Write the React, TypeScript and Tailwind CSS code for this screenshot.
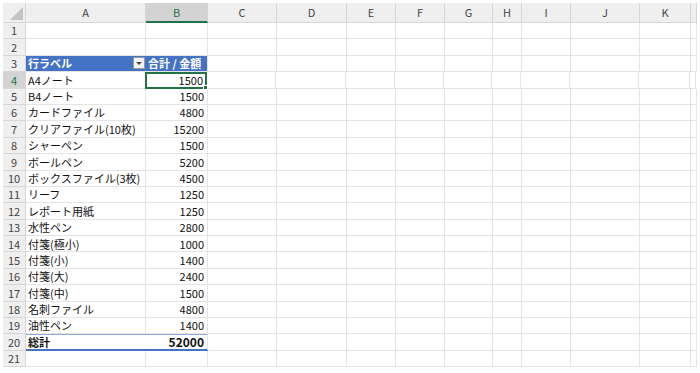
import React from 'react';

const colWidths = [
  'w-[120px]',
  'w-[62px]',
  'w-[69px]',
  'w-[70px]',
  'w-[49px]',
  'w-[49px]',
  'w-[48px]',
  'w-[29px]',
  'w-[49px]',
  'w-[69px]',
  'w-[51px]',
  'w-[6px]',
];
const colNames = ['A', 'B', 'C', 'D', 'E', 'F', 'G', 'H', 'I', 'J', 'K', ''];

const items: [string, number][] = [
  ['A4ノート', 1500],
  ['B4ノート', 1500],
  ['カードファイル', 4800],
  ['クリアファイル(10枚)', 15200],
  ['シャーペン', 1500],
  ['ボールペン', 5200],
  ['ボックスファイル(3枚)', 4500],
  ['リーフ', 1250],
  ['レポート用紙', 1250],
  ['水性ペン', 2800],
  ['付箋(極小)', 1000],
  ['付箋(小)', 1400],
  ['付箋(大)', 2400],
  ['付箋(中)', 1500],
  ['名刺ファイル', 4800],
  ['油性ペン', 1400],
];

const font = { fontFamily: '"Noto Sans CJK JP", "Noto Sans", sans-serif' };

// 空セル（C列以降）
const EmptyCells = () => (
  <>
    {colWidths.slice(2).map((w, i) => (
      <div key={i} className={`${w} shrink-0 border-r border-b border-[#e4e4e4]`} />
    ))}
  </>
);

const RowHead = ({ n, active }: { n: number; active?: boolean }) => (
  <div
    className={`w-[23px] shrink-0 flex items-center justify-center text-[11px] border-r border-b border-[#d6d6d6] ${
      active ? 'bg-[#d3d3d3] text-[#217346]' : 'bg-[#efefef] text-[#444]'
    }`}
  >
    {n}
  </div>
);

const Row = ({ n, children, active }: { n: number; children?: React.ReactNode; active?: boolean }) => (
  <div className="flex h-[16.4px]">
    <RowHead n={n} active={active} />
    {children ?? (
      <>
        <div className={`${colWidths[0]} shrink-0 border-r border-b border-[#e4e4e4]`} />
        <div className={`${colWidths[1]} shrink-0 border-r border-b border-[#e4e4e4]`} />
      </>
    )}
    <EmptyCells />
  </div>
);

export default function App() {
  return (
    <div className="w-[700px] h-[373px] bg-white pl-[3px] pt-[3px] overflow-hidden text-[#111]" style={font}>
      {/* 列見出し */}
      <div className="flex h-[20px]">
        <div className="w-[23px] shrink-0 bg-[#efefef] border-r border-b border-[#d6d6d6] relative">
          <div className="absolute right-[2px] bottom-[2px] w-0 h-0 border-l-[13px] border-l-transparent border-b-[13px] border-b-[#c4c4c4]" />
        </div>
        {colWidths.map((w, i) => (
          <div
            key={i}
            className={`${w} shrink-0 flex items-center justify-center text-[11px] border-r ${
              i === 1
                ? 'bg-[#d3d3d3] text-[#217346] border-b-2 border-b-[#217346] border-r-[#d6d6d6]'
                : 'bg-[#efefef] text-[#444] border-b border-[#d6d6d6]'
            }`}
          >
            {colNames[i]}
          </div>
        ))}
      </div>

      <Row n={1} />
      <Row n={2} />
      <Row n={3}>
        <div className={`${colWidths[0]} shrink-0 bg-[#4472c4] text-white font-bold text-[11px] flex items-center justify-between pl-[2px] pr-[1px] border-b border-[#e4e4e4]`}>
          <span>行ラベル</span>
          <span className="w-[12px] h-[12px] bg-[#f3f3f3] border border-[#9a9a9a] flex items-center justify-center">
            <span className="w-0 h-0 border-l-[3px] border-r-[3px] border-t-[3px] border-l-transparent border-r-transparent border-t-[#444]" />
          </span>
        </div>
        <div className={`${colWidths[1]} shrink-0 bg-[#4472c4] text-white font-bold text-[11px] flex items-center pl-[2px] border-r border-b border-[#e4e4e4] whitespace-nowrap`}>
          合計 / 金額
        </div>
      </Row>
      {items.map(([name, v], i) => (
        <Row key={name} n={i + 4} active={i === 0}>
          <div className={`${colWidths[0]} shrink-0 text-[11px] flex items-center pl-[2px] border-r border-b border-[#e4e4e4] whitespace-nowrap`}>
            {name}
          </div>
          {i === 0 ? (
            <div className={`${colWidths[1]} shrink-0 text-[11px] flex items-center justify-end pr-[2px] border-2 border-[#217346] relative -ml-px`}>
              {v}
              <span className="absolute -right-[3px] -bottom-[3px] w-[5px] h-[5px] bg-[#217346] border border-white" />
            </div>
          ) : (
            <div className={`${colWidths[1]} shrink-0 text-[11px] flex items-center justify-end pr-[3px] border-r border-b border-[#e4e4e4]`}>
              {v}
            </div>
          )}
        </Row>
      ))}
      <Row n={20}>
        <div className={`${colWidths[0]} shrink-0 text-[11px] font-bold flex items-center pl-[2px] border-t border-t-[#8ea9db] border-b-2 border-b-[#4472c4]`}>
          総計
        </div>
        <div className={`${colWidths[1]} shrink-0 text-[12px] font-bold flex items-center justify-end pr-[3px] border-r border-r-[#e4e4e4] border-t border-t-[#8ea9db] border-b-2 border-b-[#4472c4]`}>
          52000
        </div>
      </Row>
      <Row n={21} />
    </div>
  );
}
